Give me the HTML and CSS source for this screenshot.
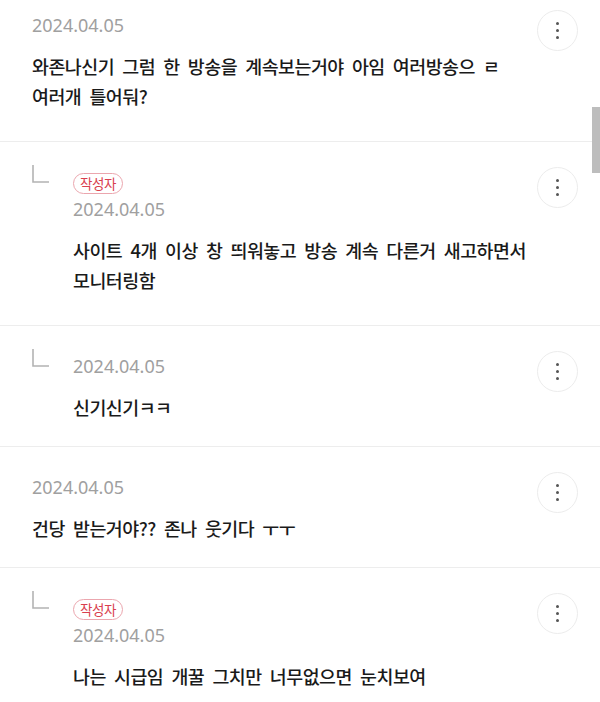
FILE: index.html
```html
<!DOCTYPE html>
<html lang="ko">
<head>
<meta charset="utf-8">
<title>댓글</title>
<link rel="stylesheet" href="styles.css">
</head>
<body>
<div class="list">
  <div class="item">
    <div class="content">
      <div class="date">2024.04.05</div>
      <p class="text multi">와존나신기 그럼 한 방송을 계속보는거야 아임 여러방송으 ㄹ<br>여러개 틀어둬?</p>
    </div>
    <button class="more" aria-label="더보기"><span></span><span></span><span></span></button>
  </div>

  <div class="item reply">
    <svg class="reply-icon" width="17" height="18" viewBox="0 0 17 18"><path d="M1 0 V17 H17" fill="none" stroke="#b3b3b3" stroke-width="1.6"/></svg>
    <div class="content">
      <span class="badge">작성자</span>
      <div class="date">2024.04.05</div>
      <p class="text multi">사이트 4개 이상 창 띄워놓고 방송 계속 다른거 새고하면서<br>모니터링함</p>
    </div>
    <button class="more" aria-label="더보기"><span></span><span></span><span></span></button>
  </div>

  <div class="item reply">
    <svg class="reply-icon" width="17" height="18" viewBox="0 0 17 18"><path d="M1 0 V17 H17" fill="none" stroke="#b3b3b3" stroke-width="1.6"/></svg>
    <div class="content">
      <div class="date">2024.04.05</div>
      <p class="text">신기신기ㅋㅋ</p>
    </div>
    <button class="more" aria-label="더보기"><span></span><span></span><span></span></button>
  </div>

  <div class="item">
    <div class="content">
      <div class="date">2024.04.05</div>
      <p class="text">건당 받는거야?? 존나 웃기다 ㅜㅜ</p>
    </div>
    <button class="more" aria-label="더보기"><span></span><span></span><span></span></button>
  </div>

  <div class="item reply">
    <svg class="reply-icon" width="17" height="18" viewBox="0 0 17 18"><path d="M1 0 V17 H17" fill="none" stroke="#b3b3b3" stroke-width="1.6"/></svg>
    <div class="content">
      <span class="badge">작성자</span>
      <div class="date">2024.04.05</div>
      <p class="text">나는 시급임 개꿀 그치만 너무없으면 눈치보여</p>
    </div>
    <button class="more" aria-label="더보기"><span></span><span></span><span></span></button>
  </div>
</div>
<div class="scrollbar"></div>
</body>
</html>
```

FILE: styles.css
```css
html, body {
  margin: 0;
  padding: 0;
  background: #fff;
}
body {
  font-family: "Noto Sans CJK KR", "Noto Sans", sans-serif;
  color: #1a1a1a;
  overflow: hidden;
}
.list {
  margin-top: -15px;
}
.item {
  display: flex;
  align-items: flex-start;
  padding: 25px 22px 24px 32px;
  border-bottom: 1px solid #ededed;
}
.reply-icon {
  flex: none;
  margin-top: -2px;
  margin-right: 24px;
}
.content {
  flex: 1;
  min-width: 0;
  padding-top: 5px;
}
.date {
  font-family: "Noto Sans", sans-serif;
  font-size: 18px;
  line-height: 20px;
  height: 20px;
  color: #a0a0a0;
}
.badge {
  display: flex;
  align-items: center;
  justify-content: center;
  box-sizing: border-box;
  width: 50px;
  height: 21px;
  margin-top: 1px;
  margin-bottom: 5px;
  border: 1px solid #eba6ae;
  border-radius: 11px;
  color: #d9404e;
  font-size: 13.5px;
  letter-spacing: -0.5px;
  line-height: 1;
}
.text {
  margin: 16px 0 0;
  font-size: 18.4px;
  font-weight: 500;
  line-height: 30px;
  letter-spacing: -0.5px;
  word-spacing: 3.5px;
  white-space: nowrap;
}
.text.multi {
  margin-bottom: 6px;
}
.more {
  flex: none;
  width: 41px;
  height: 41px;
  padding: 0;
  border: 1px solid #ececec;
  border-radius: 50%;
  background: #fff;
  display: flex;
  flex-direction: column;
  align-items: center;
  justify-content: center;
  gap: 3.5px;
}
.more span {
  width: 3.4px;
  height: 3.4px;
  border-radius: 50%;
  background: #555;
}
.scrollbar {
  position: fixed;
  right: 0;
  top: 107px;
  width: 8px;
  height: 66px;
  background: #bdbdbd;
}
```
